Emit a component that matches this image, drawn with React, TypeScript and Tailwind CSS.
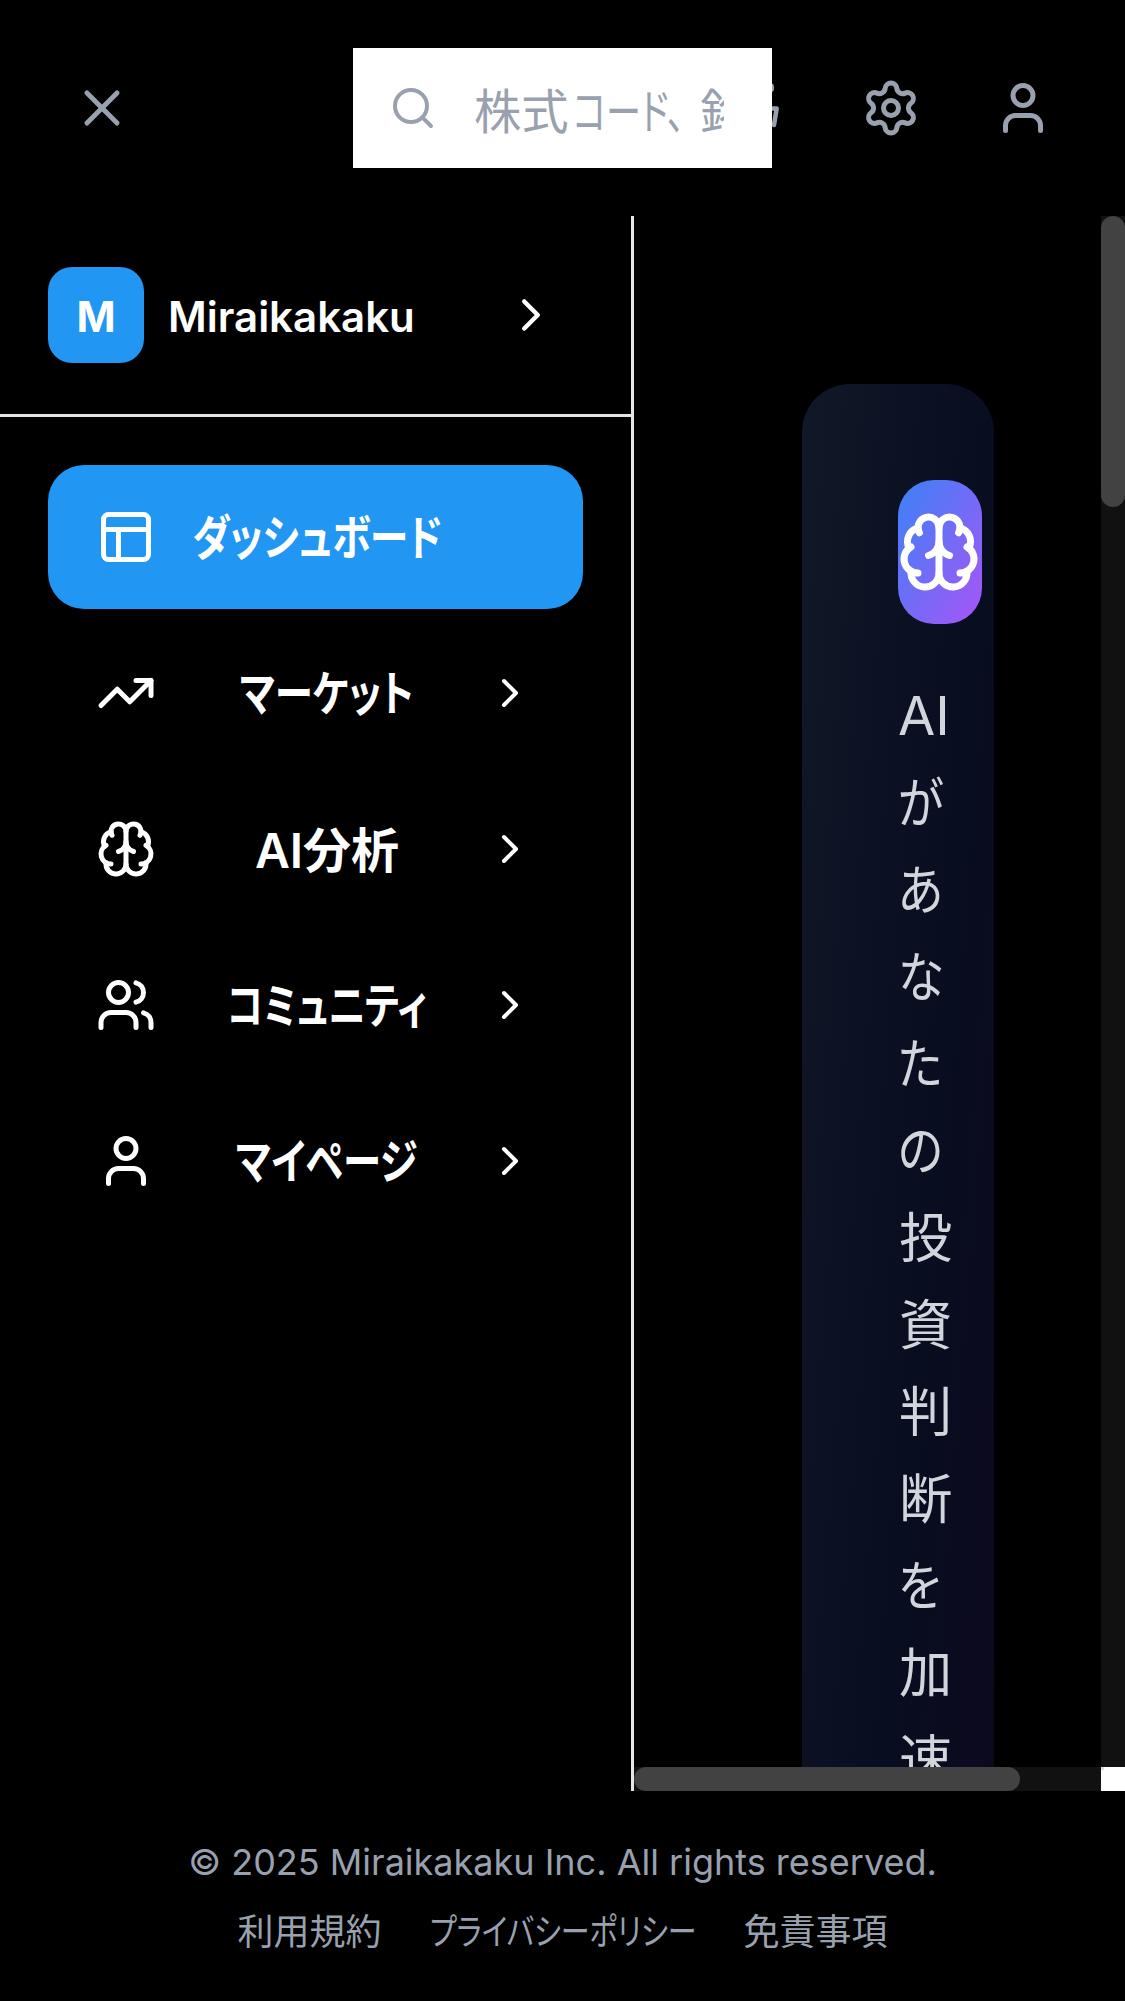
import { Brain, ChevronRight, PanelsTopLeft, Search, Settings, TrendingUp, User, Users, X } from "lucide-react";
import type { LucideIcon } from "lucide-react";

const navItems: { label: string; icon: LucideIcon; labelClass: string }[] = [
  { label: "マーケット", icon: TrendingUp, labelClass: "scale-x-[0.8]" },
  { label: "AI分析", icon: Brain, labelClass: "pt-0.5" },
  { label: "コミュニティ", icon: Users, labelClass: "scale-x-[0.775]" },
  { label: "マイページ", icon: User, labelClass: "scale-x-[0.8]" },
];

const headline = ["が", "あ", "な", "た", "の", "投", "資", "判", "断", "を", "加", "速"];
const isKana = (c: string) => /[ぁ-ん]/.test(c);

export default function App() {
  return (
    <div className="flex h-[2001px] w-[1125px] flex-col overflow-hidden bg-black font-['Inter','Noto_Sans_CJK_JP',sans-serif] text-white [font-feature-settings:'palt']">
      <header className="flex h-[216px] shrink-0 items-center px-[72px] text-gray-400">
        <X className="size-[60px] shrink-0" />
        <div className="ml-[221px] flex h-[120px] w-[419px] shrink-0 items-center bg-white pr-12 pl-9">
          <Search className="size-12 shrink-0" />
          <div className="ml-[37px] flex min-w-0 grow overflow-hidden pt-2 text-[48px] leading-[72px] whitespace-nowrap">
            <span className="w-[99px] shrink-0 origin-left scale-x-[0.985]">株式</span>
            <span className="w-[127px] shrink-0 origin-left scale-x-[0.73]">コード、</span>
            <span className="shrink-0">銘柄名で検索</span>
          </div>
        </div>
        <svg className="h-[60px] w-2 shrink-0" viewBox="0 0 8 60" fill="none" stroke="currentColor" strokeLinecap="round" strokeLinejoin="round">
          <path d="M-1 8.5V11" strokeWidth="6" />
          <path d="M-3 30.5H4.7L2 47" strokeWidth="4.5" />
        </svg>
        <Settings className="ml-[81px] size-[60px] shrink-0" />
        <User className="ml-[72px] size-[60px] shrink-0" />
      </header>

      <div className="flex h-[1575px] shrink-0">
        <aside className="flex w-[634px] shrink-0 flex-col border-r-[3px] border-neutral-200">
          <div className="flex h-[201px] shrink-0 items-center border-b-[3px] border-neutral-200 px-12">
            <div className="flex size-24 items-center justify-center rounded-3xl bg-[#2196f3] pt-0.5 text-[42px] font-bold">M</div>
            <span className="ml-6 pt-0.5 text-[42px] font-semibold">Miraikakaku</span>
            <ChevronRight className="mr-[25px] ml-auto size-[54px]" />
          </div>
          <nav className="flex flex-col gap-3 px-12 pt-12">
            <button className="flex h-36 items-center rounded-[36px] bg-[#2196f3] px-12 text-[48px] font-semibold">
              <PanelsTopLeft className="size-[60px]" />
              <span className="ml-9 origin-left scale-x-[0.81] pt-0.5 whitespace-nowrap">ダッシュボード</span>
            </button>
            {navItems.map(({ label, icon: Icon, labelClass }) => (
              <button key={label} className="flex h-36 items-center pr-[49px] pl-12 text-[48px] font-semibold whitespace-nowrap">
                <Icon className="size-[60px] shrink-0" />
                <span className="ml-3 flex min-w-0 grow justify-center pt-0.5">
                  <span className={labelClass}>{label}</span>
                </span>
                <ChevronRight className="size-12 shrink-0" />
              </button>
            ))}
          </nav>
        </aside>

        <div className="flex min-w-0 grow flex-col">
          <div className="flex h-[1551px] shrink-0">
            <main className="w-[467px] shrink-0 overflow-hidden pt-[168px] pl-[168px]">
              <section className="h-[2400px] w-48 rounded-[48px] bg-linear-to-br/srgb from-[#111827] via-[#080d20] to-[#10071c] pt-24 pl-24">
                <div className="flex h-36 w-[84px] items-center rounded-[36px] bg-linear-to-br/srgb from-[#3b82f6] to-[#a855f7]">
                  <Brain className="-ml-px size-[84px] shrink-0" />
                </div>
                <div className="mt-12 flex flex-col items-start text-[54px] leading-[87px] text-gray-300">
                  <span className="mb-px">AI</span>
                  {headline.map((c) => (
                    <span key={c} className={isKana(c) ? "origin-left scale-x-[0.86]" : "origin-left scale-x-[0.985] pl-px"}>
                      {c}
                    </span>
                  ))}
                </div>
              </section>
            </main>
            <div className="w-6 bg-[#111]">
              <div className="h-[291px] rounded-full bg-[#424242]" />
            </div>
          </div>
          <div className="flex h-6 shrink-0 bg-[#111]">
            <div className="w-[386px] rounded-full bg-[#424242]" />
            <div className="ml-auto w-6 bg-white">
              <div className="size-[3px] bg-[#dcdcdc]" />
            </div>
          </div>
        </div>
      </div>

      <footer className="flex flex-col items-center pt-[35px] text-[36px] text-gray-400">
        <p className="leading-[72px]">© 2025 Miraikakaku Inc. All rights reserved.</p>
        <div className="flex gap-12 pt-px leading-[66px] whitespace-nowrap">
          <span>利用規約</span>
          <span className="w-[266px] origin-left scale-x-[0.805]">プライバシーポリシー</span>
          <span>免責事項</span>
        </div>
      </footer>
    </div>
  );
}
